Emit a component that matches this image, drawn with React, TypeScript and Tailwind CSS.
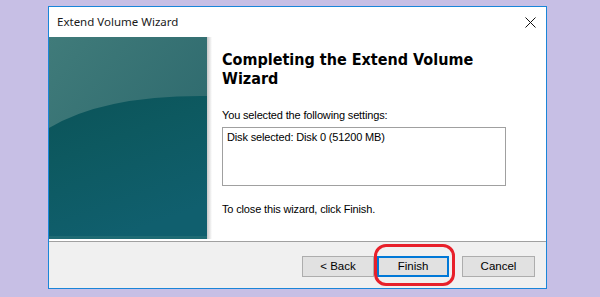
import React from "react";

function Panel() {
  return (
    <svg width="158" height="202" viewBox="0 0 158 202" className="block">
      <defs>
        <linearGradient id="top" x1="0" y1="0" x2="1" y2="1">
          <stop offset="0" stopColor="#407b7a" />
          <stop offset="1" stopColor="#28646a" />
        </linearGradient>
        <linearGradient id="low" x1="0" y1="0" x2="0.4" y2="1">
          <stop offset="0" stopColor="#0b5359" />
          <stop offset="0.4" stopColor="#0d5960" />
          <stop offset="1" stopColor="#105f6e" />
        </linearGradient>
      </defs>
      <rect width="158" height="202" fill="url(#top)" />
      <path d="M0,91 Q55,58 158,59 L158,202 L0,202 Z" fill="url(#low)" />
      <rect x="0" y="199" width="158" height="3" fill="#2a7378" opacity="0.6" />
    </svg>
  );
}

export default function App() {
  return (
    <div className="w-[600px] h-[297px] bg-[#c7bfe5] pl-[48px] pt-[6px] overflow-hidden">
      <div className="w-[499px] h-[283px] border border-[#1a85d8] bg-white flex flex-col">
        <div className="h-[30px] flex items-center justify-between pl-[8px] pr-[10px]">
          <span className="text-[11.5px] text-[#1a1a1a] font-['Noto_Sans',sans-serif] leading-none">
            Extend Volume Wizard
          </span>
          <svg width="11" height="11" viewBox="0 0 11 11">
            <path d="M0.5,0.5 L10.5,10.5 M10.5,0.5 L0.5,10.5" stroke="#111" strokeWidth="1" />
          </svg>
        </div>
        <div className="h-[204px] flex">
          <Panel />
          <div className="w-[5px] h-[202px] bg-gradient-to-r from-[#c8c8c8] to-white" />
          <div className="flex-1 pl-[10px] pt-[13px] font-['Liberation_Sans',Arial,sans-serif] text-[11px] tracking-[-0.15px] text-black">
            <div className="font-['DejaVu_Sans_Condensed','DejaVu_Sans',Verdana,sans-serif] font-bold text-[16px] leading-[19px] tracking-normal w-[280px]">
              Completing the Extend Volume Wizard
            </div>
            <div className="mt-[20px] leading-[14px]">You selected the following settings:</div>
            <div className="mt-[5px] w-[284px] h-[59px] border border-[#a0a0a0] px-[4px] pt-[2px] leading-[14px]">
              Disk selected: Disk 0 (51200 MB)
            </div>
            <div className="mt-[16px] leading-[14px]">To close this wizard, click Finish.</div>
          </div>
        </div>
        <div className="h-px bg-[#a0a0a0]" />
        <div className="relative flex-1 bg-[#f0f0f0] flex items-start pt-[14px] pl-[253px] font-['Liberation_Sans',Arial,sans-serif] text-[11.5px] text-black">
          <div className="w-[72px] h-[21px] border border-[#adadad] bg-[#e1e1e1] flex items-center justify-center">
            &lt; Back
          </div>
          <div className="ml-[3px] w-[72px] h-[21px] border-2 border-[#0078d7] bg-[#e1e1e1] flex items-center justify-center">
            Finish
          </div>
          <div className="ml-[13px] w-[73px] h-[21px] border border-[#adadad] bg-[#e1e1e1] flex items-center justify-center">
            Cancel
          </div>
          <div className="absolute left-[325px] top-[2px] w-[81px] h-[42px] border-[3px] border-[#e8202a] rounded-[12px]" />
        </div>
      </div>
    </div>
  );
}
